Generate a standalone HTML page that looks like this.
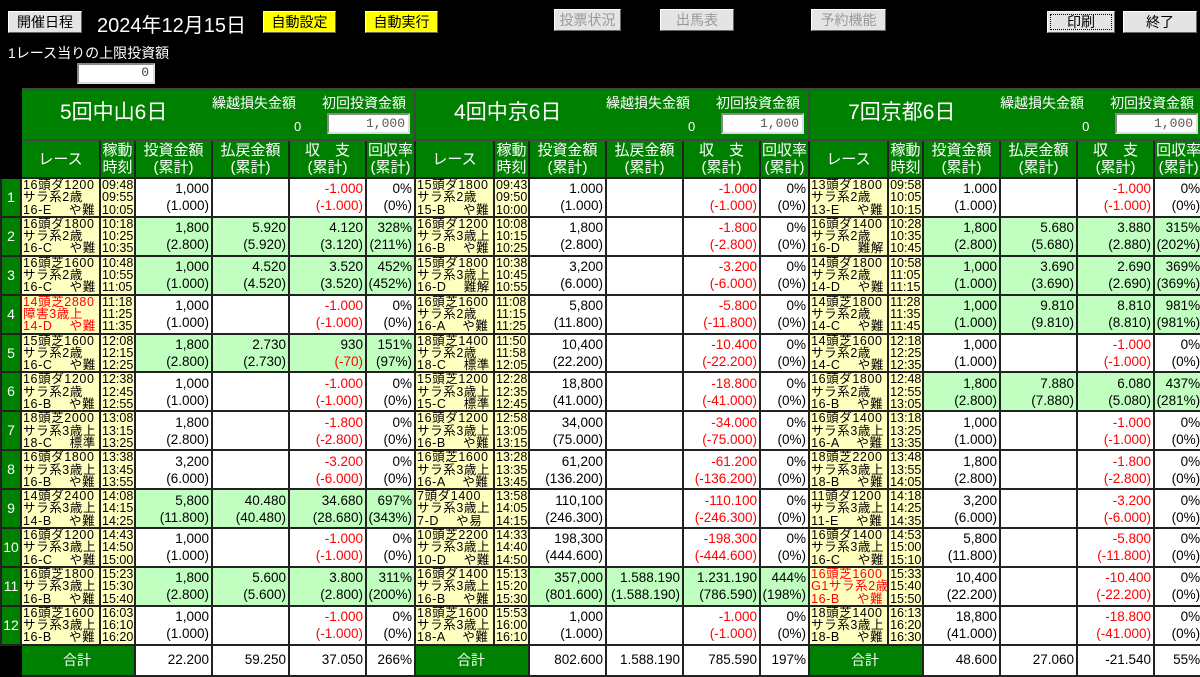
<!DOCTYPE html>
<html><head><meta charset="utf-8">
<style>
body{margin:0;width:1200px;height:676px;background:#000;overflow:hidden;position:relative;font-family:"Liberation Sans","Noto Sans CJK JP",sans-serif;}
.btn{position:absolute;height:22px;background:#e4e4e4;border:1px solid #fff;border-right-color:#666;border-bottom-color:#666;box-sizing:border-box;font-size:14px;line-height:20px;text-align:center;color:#000;}
.dis{color:#999;}
.yel{background:#ffff00;}
.lbl{position:absolute;color:#fff;}
.inp{position:absolute;background:#fff;border:2px solid #888;border-right-color:#ddd;border-bottom-color:#ddd;box-sizing:border-box;text-align:right;font-size:13px;color:#444;padding-right:4px;line-height:16px;font-family:"Liberation Mono",monospace;}
table{position:absolute;left:0;top:88px;border-collapse:collapse;table-layout:fixed;width:1199px;}
td{border:2px solid #222;padding:0;background:#fff;font-size:13.5px;line-height:17px;text-align:right;padding-right:2px;white-space:nowrap;overflow:hidden;color:#000;}
td.no{background:#008000;color:#fff;text-align:center;padding:0;font-size:14px;}
td.blk{background:#000;border-color:#000;}
td.r{background:#ffffc0;text-align:left;font-size:12.5px;line-height:12.3px;padding:0 0 0 1px;letter-spacing:0.6px;}
td.t{background:#ffffc0;text-align:left;font-size:12.5px;line-height:12.3px;padding:0 0 0 1px;}
td.g{background:#c0ffc0;}
.x{color:#f00;}
td.hd{background:#008000;color:#fff;text-align:center;font-size:15px;line-height:17px;padding:0;}
td.ph{background:#008000;color:#fff;position:relative;padding:0;border-color:#444;}
td.tot{background:#008000;color:#fff;text-align:center;font-size:14px;}
tr.d td{height:35px;}
tr.s td{line-height:28px;}
.pt{position:absolute;left:38px;top:14px;font-size:21px;}
.p1{position:absolute;left:190px;top:5px;font-size:14px;}
.p0{position:absolute;left:272px;top:28px;font-size:13px;}
.p2{position:absolute;left:300px;top:5px;font-size:14px;}
.pi{position:absolute;left:305px;top:23px;width:83px;height:21px;background:#fff;border:2px solid #888;border-right-color:#ddd;border-bottom-color:#ddd;box-sizing:border-box;text-align:right;color:#555;font-size:13px;line-height:17px;padding-right:3px;font-family:"Liberation Mono",monospace;}
</style></head><body>
<div class="btn" style="left:8px;top:11px;width:74px;">開催日程</div>
<div class="lbl" style="left:97px;top:9px;font-size:20px;">2024年12月15日</div>
<div class="btn yel" style="left:263px;top:11px;width:73px;">自動設定</div>
<div class="btn yel" style="left:365px;top:11px;width:73px;">自動実行</div>
<div class="btn dis" style="left:554px;top:9px;width:67px;">投票状況</div>
<div class="btn dis" style="left:660px;top:9px;width:74px;">出馬表</div>
<div class="btn dis" style="left:811px;top:9px;width:75px;">予約機能</div>
<div class="btn" style="left:1047px;top:11px;width:68px;outline:1px dotted #000;outline-offset:-4px;">印刷</div>
<div class="btn" style="left:1123px;top:11px;width:74px;">終了</div>
<div class="lbl" style="left:8px;top:43px;font-size:14px;">1レース当りの上限投資額</div>
<div class="inp" style="left:77px;top:63px;width:78px;height:21px;">0</div>

<table>
<colgroup><col style="width:20px">
<col style="width:79px"><col style="width:35px"><col style="width:77px"><col style="width:77px"><col style="width:77px"><col style="width:49px">
<col style="width:79px"><col style="width:35px"><col style="width:77px"><col style="width:77px"><col style="width:77px"><col style="width:49px">
<col style="width:79px"><col style="width:35px"><col style="width:77px"><col style="width:77px"><col style="width:77px"><col style="width:49px">
</colgroup>
<tr style="height:51px"><td class="blk"></td>
<td class="ph" colspan="6"><span class="pt">5回中山6日</span><span class="p1">繰越損失金額</span><span class="p0">0</span><span class="p2">初回投資金額</span><span class="pi">1,000</span></td>
<td class="ph" colspan="6"><span class="pt">4回中京6日</span><span class="p1">繰越損失金額</span><span class="p0">0</span><span class="p2">初回投資金額</span><span class="pi">1,000</span></td>
<td class="ph" colspan="6"><span class="pt">7回京都6日</span><span class="p1">繰越損失金額</span><span class="p0">0</span><span class="p2">初回投資金額</span><span class="pi">1,000</span></td>
</tr>
<tr style="height:38px"><td class="blk"></td>
<td class="hd">レース</td><td class="hd">稼動<br>時刻</td><td class="hd">投資金額<br>(累計)</td><td class="hd">払戻金額<br>(累計)</td><td class="hd">収　支<br>(累計)</td><td class="hd">回収率<br>(累計)</td>
<td class="hd">レース</td><td class="hd">稼動<br>時刻</td><td class="hd">投資金額<br>(累計)</td><td class="hd">払戻金額<br>(累計)</td><td class="hd">収　支<br>(累計)</td><td class="hd">回収率<br>(累計)</td>
<td class="hd">レース</td><td class="hd">稼動<br>時刻</td><td class="hd">投資金額<br>(累計)</td><td class="hd">払戻金額<br>(累計)</td><td class="hd">収　支<br>(累計)</td><td class="hd">回収率<br>(累計)</td>
</tr>

<tr class="d"><td class="no">1</td>
<td class="r">16頭ダ1200<br>サラ系2歳<br>16-E　 や難</td><td class="t">09:48<br>09:55<br>10:05</td><td>1,000<br>(1.000)</td><td></td><td class="x">-1.000<br>(-1.000)</td><td>0%<br>(0%)</td>
<td class="r">15頭ダ1800<br>サラ系2歳<br>15-B　 や難</td><td class="t">09:43<br>09:50<br>10:00</td><td>1.000<br>(1.000)</td><td></td><td class="x">-1.000<br>(-1.000)</td><td>0%<br>(0%)</td>
<td class="r">13頭ダ1800<br>サラ系2歳<br>13-E　 や難</td><td class="t">09:58<br>10:05<br>10:15</td><td>1.000<br>(1.000)</td><td></td><td class="x">-1.000<br>(-1.000)</td><td>0%<br>(0%)</td></tr>

<tr class="d"><td class="no">2</td>
<td class="r">16頭ダ1800<br>サラ系2歳<br>16-C　 や難</td><td class="t">10:18<br>10:25<br>10:35</td><td class="g">1,800<br>(2.800)</td><td class="g">5.920<br>(5.920)</td><td class="g">4.120<br>(3.120)</td><td class="g">328%<br>(211%)</td>
<td class="r">16頭ダ1200<br>サラ系3歳上<br>16-B　 や難</td><td class="t">10:08<br>10:15<br>10:25</td><td>1,800<br>(2.800)</td><td></td><td class="x">-1.800<br>(-2.800)</td><td>0%<br>(0%)</td>
<td class="r">16頭ダ1400<br>サラ系2歳<br>16-D　 難解</td><td class="t">10:28<br>10:35<br>10:45</td><td class="g">1,800<br>(2.800)</td><td class="g">5.680<br>(5.680)</td><td class="g">3.880<br>(2.880)</td><td class="g">315%<br>(202%)</td></tr>

<tr class="d"><td class="no">3</td>
<td class="r">16頭芝1600<br>サラ系2歳<br>16-C　 や難</td><td class="t">10:48<br>10:55<br>11:05</td><td class="g">1,000<br>(1.000)</td><td class="g">4.520<br>(4.520)</td><td class="g">3.520<br>(3.520)</td><td class="g">452%<br>(452%)</td>
<td class="r">15頭ダ1800<br>サラ系3歳上<br>16-D　 難解</td><td class="t">10:38<br>10:45<br>10:55</td><td>3,200<br>(6.000)</td><td></td><td class="x">-3.200<br>(-6.000)</td><td>0%<br>(0%)</td>
<td class="r">14頭ダ1800<br>サラ系2歳<br>14-D　 や難</td><td class="t">10:58<br>11:05<br>11:15</td><td class="g">1,000<br>(1.000)</td><td class="g">3.690<br>(3.690)</td><td class="g">2.690<br>(2.690)</td><td class="g">369%<br>(369%)</td></tr>

<tr class="d"><td class="no">4</td>
<td class="r x">14頭芝2880<br>障害3歳上<br>14-D　 や難</td><td class="t">11:18<br>11:25<br>11:35</td><td>1,000<br>(1.000)</td><td></td><td class="x">-1.000<br>(-1.000)</td><td>0%<br>(0%)</td>
<td class="r">16頭芝1600<br>サラ系2歳<br>16-A　 や難</td><td class="t">11:08<br>11:15<br>11:25</td><td>5,800<br>(11.800)</td><td></td><td class="x">-5.800<br>(-11.800)</td><td>0%<br>(0%)</td>
<td class="r">14頭芝1800<br>サラ系2歳<br>14-C　 や難</td><td class="t">11:28<br>11:35<br>11:45</td><td class="g">1,000<br>(1.000)</td><td class="g">9.810<br>(9.810)</td><td class="g">8.810<br>(8.810)</td><td class="g">981%<br>(981%)</td></tr>

<tr class="d"><td class="no">5</td>
<td class="r">15頭芝1600<br>サラ系2歳<br>16-C　 や難</td><td class="t">12:08<br>12:15<br>12:25</td><td class="g">1,800<br>(2.800)</td><td class="g">2.730<br>(2.730)</td><td class="g">930<br><span class="x">(-70)</span></td><td class="g">151%<br>(97%)</td>
<td class="r">18頭芝1400<br>サラ系2歳<br>18-C　 標準</td><td class="t">11:50<br>11:58<br>12:05</td><td>10,400<br>(22.200)</td><td></td><td class="x">-10.400<br>(-22.200)</td><td>0%<br>(0%)</td>
<td class="r">14頭芝1600<br>サラ系2歳<br>14-C　 や難</td><td class="t">12:18<br>12:25<br>12:35</td><td>1,000<br>(1.000)</td><td></td><td class="x">-1.000<br>(-1.000)</td><td>0%<br>(0%)</td></tr>

<tr class="d"><td class="no">6</td>
<td class="r">16頭ダ1200<br>サラ系2歳<br>16-B　 や難</td><td class="t">12:38<br>12:45<br>12:55</td><td>1,000<br>(1.000)</td><td></td><td class="x">-1.000<br>(-1.000)</td><td>0%<br>(0%)</td>
<td class="r">15頭芝1200<br>サラ系3歳上<br>15-C　 標準</td><td class="t">12:28<br>12:35<br>12:45</td><td>18,800<br>(41.000)</td><td></td><td class="x">-18.800<br>(-41.000)</td><td>0%<br>(0%)</td>
<td class="r">16頭ダ1800<br>サラ系2歳<br>16-B　 や難</td><td class="t">12:48<br>12:55<br>13:05</td><td class="g">1,800<br>(2.800)</td><td class="g">7.880<br>(7.880)</td><td class="g">6.080<br>(5.080)</td><td class="g">437%<br>(281%)</td></tr>

<tr class="d"><td class="no">7</td>
<td class="r">18頭芝2000<br>サラ系3歳上<br>18-C　 標準</td><td class="t">13:08<br>13:15<br>13:25</td><td>1,800<br>(2.800)</td><td></td><td class="x">-1.800<br>(-2.800)</td><td>0%<br>(0%)</td>
<td class="r">16頭ダ1200<br>サラ系3歳上<br>16-B　 や難</td><td class="t">12:58<br>13:05<br>13:15</td><td>34,000<br>(75.000)</td><td></td><td class="x">-34.000<br>(-75.000)</td><td>0%<br>(0%)</td>
<td class="r">16頭ダ1400<br>サラ系3歳上<br>16-A　 や難</td><td class="t">13:18<br>13:25<br>13:35</td><td>1,000<br>(1.000)</td><td></td><td class="x">-1.000<br>(-1.000)</td><td>0%<br>(0%)</td></tr>

<tr class="d"><td class="no">8</td>
<td class="r">16頭ダ1800<br>サラ系3歳上<br>16-B　 や難</td><td class="t">13:38<br>13:45<br>13:55</td><td>3,200<br>(6.000)</td><td></td><td class="x">-3.200<br>(-6.000)</td><td>0%<br>(0%)</td>
<td class="r">16頭芝1600<br>サラ系3歳上<br>16-A　 や難</td><td class="t">13:28<br>13:35<br>13:45</td><td>61,200<br>(136.200)</td><td></td><td class="x">-61.200<br>(-136.200)</td><td>0%<br>(0%)</td>
<td class="r">18頭芝2200<br>サラ系3歳上<br>18-B　 や難</td><td class="t">13:48<br>13:55<br>14:05</td><td>1,800<br>(2.800)</td><td></td><td class="x">-1.800<br>(-2.800)</td><td>0%<br>(0%)</td></tr>

<tr class="d"><td class="no">9</td>
<td class="r">14頭ダ2400<br>サラ系3歳上<br>14-B　 や難</td><td class="t">14:08<br>14:15<br>14:25</td><td class="g">5,800<br>(11.800)</td><td class="g">40.480<br>(40.480)</td><td class="g">34.680<br>(28.680)</td><td class="g">697%<br>(343%)</td>
<td class="r">7頭ダ1400<br>サラ系3歳上<br>7-D　 や易</td><td class="t">13:58<br>14:05<br>14:15</td><td>110,100<br>(246.300)</td><td></td><td class="x">-110.100<br>(-246.300)</td><td>0%<br>(0%)</td>
<td class="r">11頭ダ1200<br>サラ系3歳上<br>11-E　 や難</td><td class="t">14:18<br>14:25<br>14:35</td><td>3,200<br>(6.000)</td><td></td><td class="x">-3.200<br>(-6.000)</td><td>0%<br>(0%)</td></tr>

<tr class="d"><td class="no">10</td>
<td class="r">16頭ダ1200<br>サラ系3歳上<br>16-C　 や難</td><td class="t">14:43<br>14:50<br>15:00</td><td>1,000<br>(1.000)</td><td></td><td class="x">-1.000<br>(-1.000)</td><td>0%<br>(0%)</td>
<td class="r">10頭芝2200<br>サラ系3歳上<br>10-D　 や難</td><td class="t">14:33<br>14:40<br>14:50</td><td>198,300<br>(444.600)</td><td></td><td class="x">-198.300<br>(-444.600)</td><td>0%<br>(0%)</td>
<td class="r">16頭ダ1400<br>サラ系3歳上<br>16-C　 や難</td><td class="t">14:53<br>15:00<br>15:10</td><td>5,800<br>(11.800)</td><td></td><td class="x">-5.800<br>(-11.800)</td><td>0%<br>(0%)</td></tr>

<tr class="d"><td class="no">11</td>
<td class="r">16頭芝1800<br>サラ系3歳上<br>16-B　 や難</td><td class="t">15:23<br>15:30<br>15:40</td><td class="g">1,800<br>(2.800)</td><td class="g">5.600<br>(5.600)</td><td class="g">3.800<br>(2.800)</td><td class="g">311%<br>(200%)</td>
<td class="r">16頭ダ1400<br>サラ系3歳上<br>16-B　 や難</td><td class="t">15:13<br>15:20<br>15:30</td><td class="g">357,000<br>(801.600)</td><td class="g">1.588.190<br>(1.588.190)</td><td class="g">1.231.190<br>(786.590)</td><td class="g">444%<br>(198%)</td>
<td class="r x">16頭芝1600<br>G1サラ系2歳<br>16-B　 や難</td><td class="t">15:33<br>15:40<br>15:50</td><td>10,400<br>(22.200)</td><td></td><td class="x">-10.400<br>(-22.200)</td><td>0%<br>(0%)</td></tr>

<tr class="d"><td class="no">12</td>
<td class="r">16頭芝1600<br>サラ系3歳上<br>16-B　 や難</td><td class="t">16:03<br>16:10<br>16:20</td><td>1,000<br>(1.000)</td><td></td><td class="x">-1.000<br>(-1.000)</td><td>0%<br>(0%)</td>
<td class="r">18頭芝1600<br>サラ系3歳上<br>18-A　 や難</td><td class="t">15:53<br>16:00<br>16:10</td><td>1,000<br>(1.000)</td><td></td><td class="x">-1.000<br>(-1.000)</td><td>0%<br>(0%)</td>
<td class="r">18頭芝1400<br>サラ系3歳上<br>18-B　 や難</td><td class="t">16:13<br>16:20<br>16:30</td><td>18,800<br>(41.000)</td><td></td><td class="x">-18.800<br>(-41.000)</td><td>0%<br>(0%)</td></tr>

<tr class="s" style="height:31px"><td class="blk"></td>
<td class="tot" colspan="2">合計</td><td>22.200</td><td>59.250</td><td>37.050</td><td>266%</td>
<td class="tot" colspan="2">合計</td><td>802.600</td><td>1.588.190</td><td>785.590</td><td>197%</td>
<td class="tot" colspan="2">合計</td><td>48.600</td><td>27.060</td><td>-21.540</td><td>55%</td></tr>
</table>
</body></html>
